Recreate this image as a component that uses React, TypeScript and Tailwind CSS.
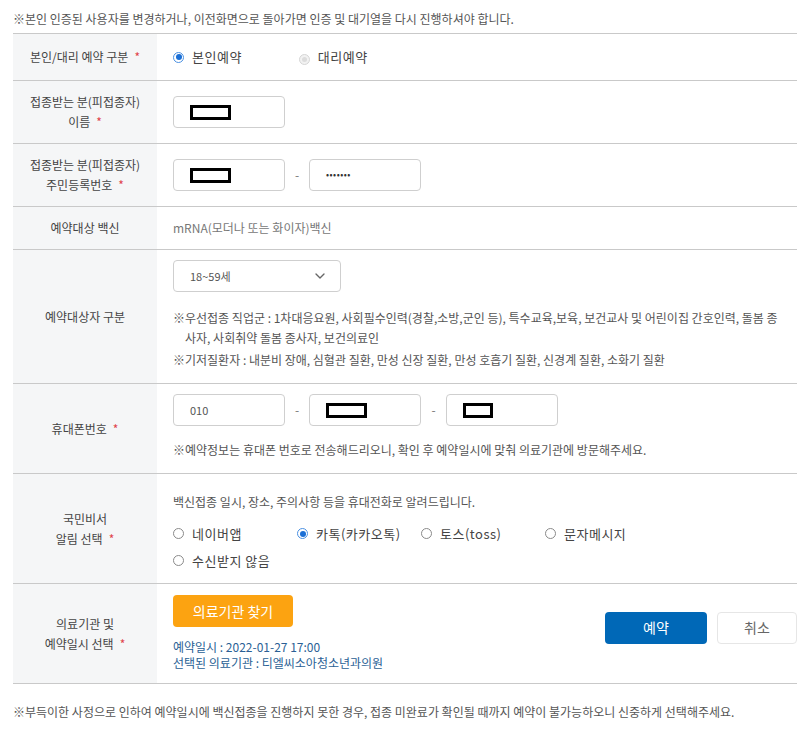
import { ChevronDown } from 'lucide-react';

const font = { fontFamily: '"Noto Sans CJK KR", "Noto Sans", sans-serif' };

const Req = () => <span className="ml-1.5 text-[#e0434a]">*</span>;

const Radio = ({ checked, disabled }: { checked?: boolean; disabled?: boolean }) => (
    <span
        className={
            'inline-flex items-center justify-center w-[11px] h-[11px] rounded-full border ' +
            (checked ? 'border-[#4a90e2] bg-white' : disabled ? 'border-[#d6d6d6] bg-[#f2f2f2]' : 'border-[#8a8a8a] bg-white')
        }
    >
        {checked && <span className="w-[6px] h-[6px] rounded-full bg-[#1a6fd6]" />}
        {disabled && <span className="w-[5px] h-[5px] rounded-full bg-[#dcdcdc]" />}
    </span>
);

const Redact = ({ w = 41 }: { w?: number }) => (
    <span className="inline-block h-[15px] border-[3px] border-black bg-white" style={{ width: w }} />
);

const Box = ({ children }: { children?: React.ReactNode }) => (
    <div className="w-[112px] h-[32px] rounded border border-[#cfcfcf] bg-white flex items-center px-4 text-[11px] text-[#555]">
        {children}
    </div>
);

const Row = ({ label, h, children, center = true }: { label: React.ReactNode; h: string; children: React.ReactNode; center?: boolean }) => (
    <div className={'flex border-b border-[#c9c9c9] ' + h}>
        <div className="w-[144px] shrink-0 bg-[#f5f6f7] flex items-center justify-center text-center text-[12px] leading-[20px] text-[#444]">
            <div>{label}</div>
        </div>
        <div className={'flex-1 pl-4 text-[12px] text-[#555] ' + (center ? 'flex items-center' : '')}>{children}</div>
    </div>
);

export default function App() {
    return (
        <div className="w-[812px] h-[741px] bg-white" style={font}>
            <div className="pt-[10px] pl-[13px] text-[12px] leading-[18px] text-[#555]">
                ※본인 인증된 사용자를 변경하거나, 이전화면으로 돌아가면 인증 및 대기열을 다시 진행하셔야 합니다.
            </div>
            <div className="ml-[13px] mr-[15px] mt-[5px] border-t border-[#c9c9c9]">
                <Row label={<>본인/대리 예약 구분<Req /></>} h="h-[47px]">
                    <div className="flex items-center text-[13px] tracking-[0.5px]">
                        <Radio checked />
                        <span className="ml-2 text-[#444]">본인예약</span>
                        <span className="ml-[57px]"><Radio disabled /></span>
                        <span className="ml-2 text-[#444]">대리예약</span>
                    </div>
                </Row>
                <Row label={<>접종받는 분(피접종자)<br />이름<Req /></>} h="h-[63px]">
                    <Box><Redact /></Box>
                </Row>
                <Row label={<>접종받는 분(피접종자)<br />주민등록번호<Req /></>} h="h-[63px]">
                    <div className="flex items-center">
                        <Box><Redact /></Box>
                        <span className="w-[24px] text-center text-[#777]">-</span>
                        <Box><span className="text-[9px] tracking-[0.5px] text-[#333]">•••••••</span></Box>
                    </div>
                </Row>
                <Row label="예약대상 백신" h="h-[43px]">
                    <span className="text-[#777]">mRNA(모더나 또는 화이자)백신</span>
                </Row>
                <Row label="예약대상자 구분" h="h-[134px]" center={false}>
                    <div className="pt-[10px]">
                        <div className="w-[168px] h-[32px] rounded border border-[#cfcfcf] flex items-center justify-between pl-4 pr-3 text-[11px] text-[#555]">
                            <span>18~59세</span>
                            <ChevronDown className="w-4 h-4 text-[#666]" strokeWidth={2} />
                        </div>
                        <div className="mt-[16px] text-[12px] leading-[20px] text-[#555] pr-4">
                            <div className="pl-3 -indent-3">※우선접종 직업군 : 1차대응요원, 사회필수인력(경찰,소방,군인 등), 특수교육,보육, 보건교사 및 어린이집 간호인력, 돌봄 종사자, 사회취약 돌봄 종사자, 보건의료인</div>
                            <div className="mt-[2px]">※기저질환자 : 내분비 장애, 심혈관 질환, 만성 신장 질환, 만성 호흡기 질환, 신경계 질환, 소화기 질환</div>
                        </div>
                    </div>
                </Row>
                <Row label={<>휴대폰번호<Req /></>} h="h-[90px]" center={false}>
                    <div className="pt-[10px]">
                        <div className="flex items-center">
                            <Box>010</Box>
                            <span className="w-[24px] text-center text-[#777]">-</span>
                            <Box><Redact /></Box>
                            <span className="w-[25px] text-center text-[#777]">-</span>
                            <Box><Redact w={30} /></Box>
                        </div>
                        <div className="mt-[15px] text-[#555]">
                            ※예약정보는 휴대폰 번호로 전송해드리오니, 확인 후 예약일시에 맞춰 의료기관에 방문해주세요.
                        </div>
                    </div>
                </Row>
                <Row label={<>국민비서<br />알림 선택<Req /></>} h="h-[110px]" center={false}>
                    <div className="pt-[19px] text-[#444]">
                        <div className="text-[#555]">백신접종 일시, 장소, 주의사항 등을 휴대전화로 알려드립니다.</div>
                        <div className="mt-[13px] grid grid-cols-[124px_124px_124px_124px] items-center text-[13px] tracking-[0.5px]">
                            <div className="flex items-center"><Radio /><span className="ml-2">네이버앱</span></div>
                            <div className="flex items-center"><Radio checked /><span className="ml-2">카톡(카카오톡)</span></div>
                            <div className="flex items-center"><Radio /><span className="ml-2">토스(toss)</span></div>
                            <div className="flex items-center"><Radio /><span className="ml-2">문자메시지</span></div>
                        </div>
                        <div className="mt-[7px] flex items-center text-[13px] tracking-[0.5px]"><Radio /><span className="ml-2">수신받지 않음</span></div>
                    </div>
                </Row>
                <Row label={<>의료기관 및<br />예약일시 선택<Req /></>} h="h-[100px]" center={false}>
                    <div className="flex h-full">
                        <div className="pt-[11px]">
                            <button className="w-[120px] h-[32px] rounded bg-[#fca311] text-white text-[14px]">의료기관 찾기</button>
                            <div className="mt-[12px] text-[12px] leading-[16px] text-[#2a5f95]">
                                <div>예약일시 : 2022-01-27 17:00</div>
                                <div>선택된 의료기관 : 티엘씨소아청소년과의원</div>
                            </div>
                        </div>
                        <div className="ml-auto flex items-center gap-[10px] pb-[12px]">
                            <button className="w-[102px] h-[32px] rounded-sm bg-[#0068b7] text-white text-[14px]">예약</button>
                            <button className="w-[80px] h-[32px] rounded-sm border border-[#e6e6e6] bg-white text-[#666] text-[14px]">취소</button>
                        </div>
                    </div>
                </Row>
            </div>
            <div className="mt-[19px] pl-[13px] text-[12px] text-[#555]">
                ※부득이한 사정으로 인하여 예약일시에 백신접종을 진행하지 못한 경우, 접종 미완료가 확인될 때까지 예약이 불가능하오니 신중하게 선택해주세요.
            </div>
        </div>
    );
}
